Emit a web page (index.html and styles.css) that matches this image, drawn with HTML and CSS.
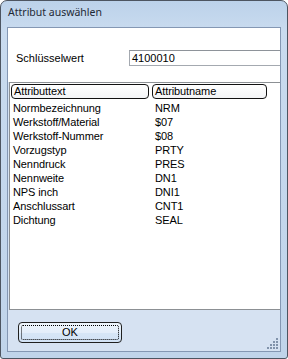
FILE: index.html
```html
<!DOCTYPE html>
<html lang="de">
<head>
    <meta charset="UTF-8">
    <title>Attribut auswählen</title>
    <link rel="stylesheet" href="styles.css">
</head>
<body>
    <div class="window">
        <div class="titlebar">Attribut auswählen</div>
        <div class="client">
            <div class="key-panel">
                <span class="key-label">Schlüsselwert</span>
                <div class="key-input">4100010</div>
            </div>
            <div class="list">
                <div class="list-head">
                    <div class="head-cell col-text">Attributtext</div>
                    <div class="head-cell col-name">Attributname</div>
                </div>
                <div class="row"><span class="col-text">Normbezeichnung</span><span class="col-name">NRM</span></div>
                <div class="row"><span class="col-text">Werkstoff/Material</span><span class="col-name">$07</span></div>
                <div class="row"><span class="col-text">Werkstoff-Nummer</span><span class="col-name">$08</span></div>
                <div class="row"><span class="col-text">Vorzugstyp</span><span class="col-name">PRTY</span></div>
                <div class="row"><span class="col-text">Nenndruck</span><span class="col-name">PRES</span></div>
                <div class="row"><span class="col-text">Nennweite</span><span class="col-name">DN1</span></div>
                <div class="row"><span class="col-text">NPS inch</span><span class="col-name">DNI1</span></div>
                <div class="row"><span class="col-text">Anschlussart</span><span class="col-name">CNT1</span></div>
                <div class="row"><span class="col-text">Dichtung</span><span class="col-name">SEAL</span></div>
            </div>
            <div class="footer">
                <button class="ok-button"><span class="focus">OK</span></button>
            </div>
        </div>
        <div class="grip">
            <svg width="12" height="12" viewBox="0 0 12 12">
                <g fill="#8193ab">
                    <rect x="10" y="1" width="2" height="2"/>
                    <rect x="7" y="4" width="2" height="2"/><rect x="10" y="4" width="2" height="2"/>
                    <rect x="4" y="7" width="2" height="2"/><rect x="7" y="7" width="2" height="2"/><rect x="10" y="7" width="2" height="2"/>
                    <rect x="1" y="10" width="2" height="2"/><rect x="4" y="10" width="2" height="2"/><rect x="7" y="10" width="2" height="2"/><rect x="10" y="10" width="2" height="2"/>
                </g>
            </svg>
        </div>
    </div>
</body>
</html>
```

FILE: styles.css
```css
html, body {
    margin: 0;
    padding: 0;
    background: #ffffff;
}
body {
    width: 288px;
    height: 359px;
    overflow: hidden;
    font-family: "Liberation Sans", Arial, sans-serif;
    font-size: 11px;
    color: #000;
}
.window {
    position: relative;
    box-sizing: border-box;
    width: 288px;
    height: 359px;
    border: 1px solid #4d5561;
    border-radius: 7px 7px 3px 3px;
    background: linear-gradient(to bottom, #bcd2ea 0px, #c9dbef 30px, #c3d6ec 60%, #c0d4ea 100%);
    padding: 0 6px 6px 6px;
    display: flex;
    flex-direction: column;
}
.titlebar {
    height: 26px;
    line-height: 23px;
    padding-left: 1px;
    font-family: "Noto Sans", "Liberation Sans", sans-serif;
    font-size: 10.5px;
    color: #1e2935;
}
.client {
    flex: 1;
    border: 1px solid #8497b3;
    background: #d6e2f2;
    display: flex;
    flex-direction: column;
}
.key-panel {
    height: 54px;
    background: #fff;
    display: flex;
    align-items: center;
    padding-top: 6px;
    box-sizing: border-box;
}
.key-label {
    width: 121px;
    padding-left: 8px;
    box-sizing: border-box;
}
.key-input {
    flex: 1;
    height: 16px;
    line-height: 15px;
    border: 1px solid #a4a9b0;
    border-right: none;
    border-top-color: #8e939a;
    padding-left: 2px;
    box-sizing: border-box;
}
.list {
    height: 228px;
    margin-left: 1px;
    border: 1px solid #8c9094;
    border-right: none;
    background: #fff;
    box-sizing: border-box;
    padding-top: 1px;
    letter-spacing: -0.1px;
}
.list-head {
    display: flex;
    gap: 3px;
    padding-left: 1px;
    margin-bottom: 2px;
}
.head-cell {
    box-sizing: border-box;
    height: 15px;
    line-height: 13px;
    border: 1px solid #111;
    border-radius: 4px;
    background: linear-gradient(to bottom, #ffffff, #f3f4f6);
    padding-left: 2px;
}
.head-cell.col-text {
    width: 138px;
}
.head-cell.col-name {
    width: 115px;
}
.row {
    display: flex;
    height: 14px;
    line-height: 15px;
    padding-left: 3px;
}
.row .col-text {
    width: 142px;
}
.footer {
    flex: 1;
    padding: 12px 0 0 10px;
}
.ok-button {
    width: 104px;
    height: 21px;
    border: 1px solid #202020;
    border-radius: 4px;
    background: linear-gradient(to bottom, #eef5fc 0%, #e4eefa 50%, #d7e6f6 51%, #d2e2f5 100%);
    padding: 2px;
    font-family: "Liberation Sans", Arial, sans-serif;
    font-size: 11px;
    color: #000;
    display: flex;
}
.ok-button .focus {
    flex: 1;
    border: 1px dotted #000;
    border-radius: 2px;
    line-height: 13px;
    text-align: center;
}
.grip {
    position: absolute;
    right: 9px;
    bottom: 9px;
    width: 12px;
    height: 12px;
}
.grip svg {
    display: block;
}
```
